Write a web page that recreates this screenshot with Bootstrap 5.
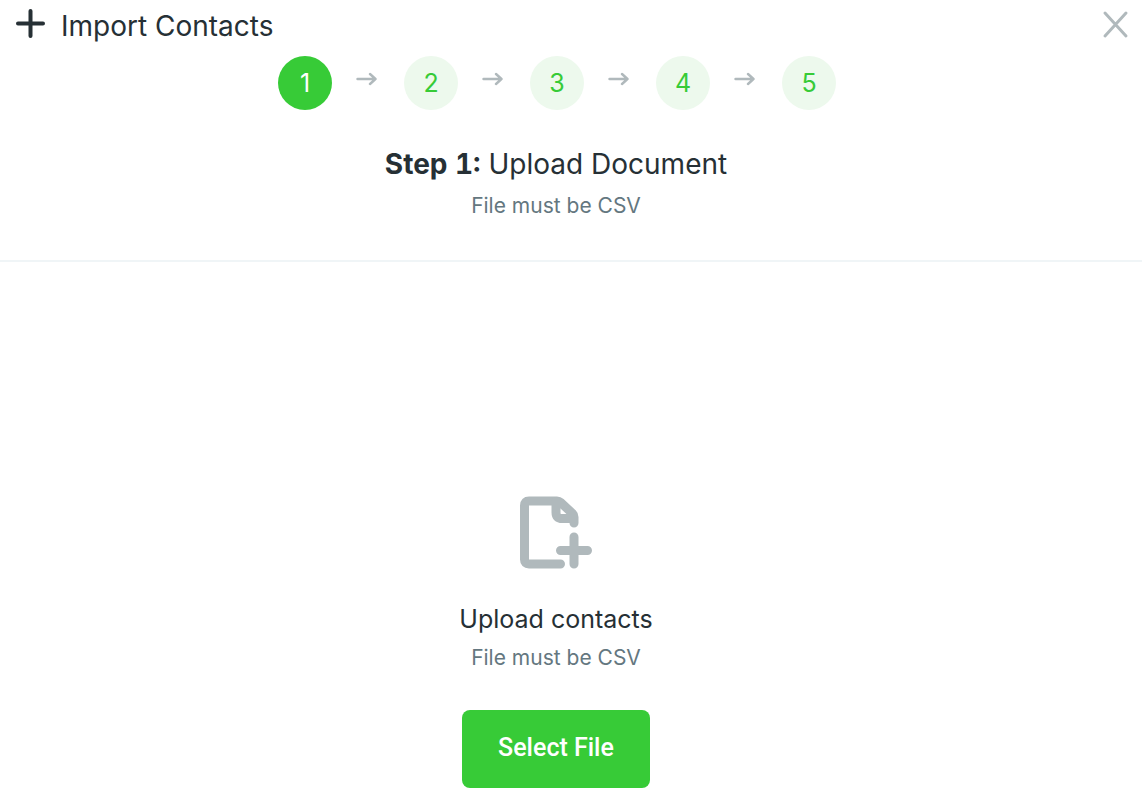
<!DOCTYPE html>
<html lang="en">
<head>
<meta charset="utf-8">
<meta name="viewport" content="width=device-width, initial-scale=1">
<title>Import Contacts</title>
<link href="https://cdn.jsdelivr.net/npm/bootstrap@5.3.0/dist/css/bootstrap.min.css" rel="stylesheet">
<style>
  :root { --ink: #263035; --muted: #647780; --soft: #b0b9bc; --brand: #37cb37; --tint: #edf9ed; }
  body { font-family: Inter, "Liberation Sans", sans-serif; color: var(--ink); }
  .title-text { font-size: 28px; line-height: 36px; font-weight: 400; margin-bottom: 10px; }
  .title-text strong { font-variant-numeric: tabular-nums; }
  .item-text { font-size: 25px; line-height: 32px; font-weight: 400; margin-bottom: 9px; }
  .hint-text { font-size: 21px; line-height: 28px; color: var(--muted); }
  .import-header { height: 56px; padding: 8px 13px 0 16px; }
  .import-header .title-text { margin-left: 16px; }
  .close-btn { color: var(--soft); line-height: 0; margin-top: 1px; }
  .import-pane { padding-right: 30px; }
  .steps { gap: 24px; padding-left: 2px; }
  .steps li { gap: 24px; }
  .step-dot { width: 54px; height: 54px; padding-top: 1px; font-size: 25px; background: var(--tint); color: var(--brand); }
  .step-dot.current { background: var(--brand); color: #fff; }
  .step-arrow { color: var(--soft); margin-right: 3px; margin-bottom: 8px; }
  .step-intro { padding-top: 36px; padding-bottom: 40px; border-bottom: 2px solid #f0f5f7; }
  .upload-area { padding-top: 234px; padding-bottom: 18px; color: var(--ink); }
  .file-icon { color: var(--soft); margin-bottom: 34px; }
  .select-btn { --bs-btn-bg: var(--brand); --bs-btn-color: #fff; --bs-btn-hover-bg: #2fb52f; --bs-btn-hover-color: #fff;
    --bs-btn-border-width: 0; --bs-btn-border-radius: 8px; --bs-btn-padding-x: 36px; --bs-btn-padding-y: 0;
    font: 500 25px/76px Roboto, sans-serif; padding-bottom: 2px; margin-top: 38px; }
</style>
</head>
<body class="bg-white">
<header class="import-header d-flex align-items-start">
  <svg width="29" height="30" viewBox="0 0 29 30" fill="none" stroke="currentColor" stroke-width="4" stroke-linecap="round" aria-hidden="true"><path d="M14.500 3v25M2 15.500h25"/></svg>
  <h1 class="title-text mb-0">Import Contacts</h1>
  <button type="button" class="close-btn btn border-0 p-0 ms-auto" aria-label="Close">
    <svg width="28" height="30" viewBox="0 0 28 30" fill="none" stroke="currentColor" stroke-width="3" stroke-linecap="round" aria-hidden="true"><path d="M4 4l21 23M25 4L4 27"/></svg>
  </button>
</header>
<main class="text-center">
  <section class="step-header">
    <div class="import-pane">
      <ol class="steps list-unstyled d-flex justify-content-center mb-0">
        <li class="d-flex align-items-center"><span class="step-dot current rounded-circle d-flex align-items-center justify-content-center">1</span><svg class="step-arrow" width="21" height="14" viewBox="0 0 21 14" fill="none" stroke="currentColor" stroke-width="2.4" stroke-linecap="round" stroke-linejoin="round" aria-hidden="true"><path d="M1.5 7H19.5M14 2l5.500 5L14 12"/></svg></li>
        <li class="d-flex align-items-center"><span class="step-dot rounded-circle d-flex align-items-center justify-content-center">2</span><svg class="step-arrow" width="21" height="14" viewBox="0 0 21 14" fill="none" stroke="currentColor" stroke-width="2.4" stroke-linecap="round" stroke-linejoin="round" aria-hidden="true"><path d="M1.5 7H19.5M14 2l5.500 5L14 12"/></svg></li>
        <li class="d-flex align-items-center"><span class="step-dot rounded-circle d-flex align-items-center justify-content-center">3</span><svg class="step-arrow" width="21" height="14" viewBox="0 0 21 14" fill="none" stroke="currentColor" stroke-width="2.4" stroke-linecap="round" stroke-linejoin="round" aria-hidden="true"><path d="M1.5 7H19.5M14 2l5.500 5L14 12"/></svg></li>
        <li class="d-flex align-items-center"><span class="step-dot rounded-circle d-flex align-items-center justify-content-center">4</span><svg class="step-arrow" width="21" height="14" viewBox="0 0 21 14" fill="none" stroke="currentColor" stroke-width="2.4" stroke-linecap="round" stroke-linejoin="round" aria-hidden="true"><path d="M1.5 7H19.5M14 2l5.500 5L14 12"/></svg></li>
        <li class="d-flex align-items-center"><span class="step-dot rounded-circle d-flex align-items-center justify-content-center">5</span></li>
      </ol>
    </div>
    <div class="step-intro import-pane">
      <h2 class="title-text"><strong>Step 1:</strong> Upload Document</h2>
      <p class="hint-text mb-0">File must be CSV</p>
    </div>
  </section>
  <section class="upload-area import-pane d-flex flex-column align-items-center">
    <svg class="file-icon" width="72" height="73" viewBox="0 0 72 73" fill="none" stroke="currentColor" stroke-width="9" stroke-linecap="round" stroke-linejoin="round" aria-hidden="true">
      <path d="M40.500 68H9q-4.500 0-4.500-4.500V9.500Q4.500 5 9 5H37q2 0 3.500 1.400L52.500 17.500q1.500 1.500 1.500 3.500V27"/>
      <path d="M36 5.500V16.500Q36 22.500 42 22.500H53.500M54 41V68M40.500 54.500h27"/>
    </svg>
    <h3 class="item-text">Upload contacts</h3>
    <p class="hint-text mb-0">File must be CSV</p>
    <button type="button" class="select-btn btn">Select File</button>
  </section>
</main>
<script src="https://cdn.jsdelivr.net/npm/bootstrap@5.3.0/dist/js/bootstrap.bundle.min.js"></script>
</body>
</html>
